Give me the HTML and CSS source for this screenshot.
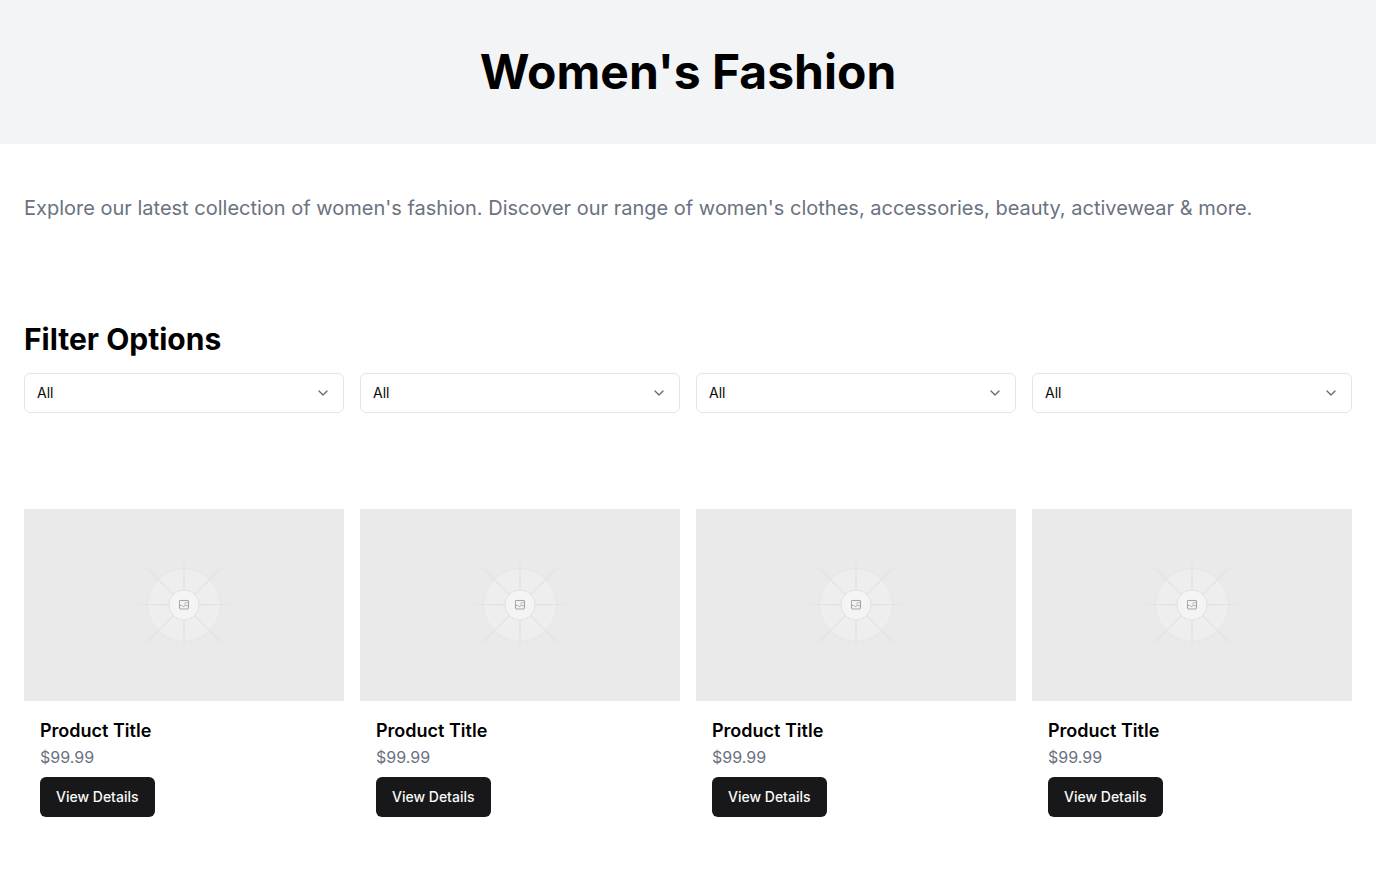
FILE: index.html
```html
<!DOCTYPE html>
<html lang="en">
<head>
<meta charset="utf-8">
<meta name="viewport" content="width=device-width, initial-scale=1">
<title>Women's Fashion</title>
<link rel="stylesheet" href="styles.css">
</head>
<body>
<svg class="defs" aria-hidden="true">
  <defs>
    <linearGradient id="fade" gradientUnits="userSpaceOnUse" x1="-47" y1="0" x2="47" y2="0">
      <stop offset="0" stop-color="#dfdfdf" stop-opacity="0.2"/>
      <stop offset="0.2" stop-color="#dfdfdf" stop-opacity="0.9"/>
      <stop offset="0.8" stop-color="#dfdfdf" stop-opacity="0.9"/>
      <stop offset="1" stop-color="#dfdfdf" stop-opacity="0.2"/>
    </linearGradient>
    <linearGradient id="fade-long" gradientUnits="userSpaceOnUse" x1="-62" y1="0" x2="62" y2="0">
      <stop offset="0" stop-color="#dfdfdf" stop-opacity="0.2"/>
      <stop offset="0.2" stop-color="#dfdfdf" stop-opacity="0.9"/>
      <stop offset="0.8" stop-color="#dfdfdf" stop-opacity="0.9"/>
      <stop offset="1" stop-color="#dfdfdf" stop-opacity="0.2"/>
    </linearGradient>
    <symbol id="placeholder" viewBox="-160 -96 320 192">
      <circle r="36.5" fill="#eeeeee" stroke="#e6e6e6"/>
      <g fill="url(#fade)">
        <rect x="-47" y="-1" width="94" height="1.2"/>
        <rect x="-47" y="-0.6" width="94" height="1.2" transform="rotate(90)"/>
      </g>
      <g fill="url(#fade-long)">
        <rect x="-60" y="-0.6" width="120" height="1.2" transform="rotate(45)"/>
        <rect x="-60" y="-0.6" width="120" height="1.2" transform="rotate(-45)"/>
      </g>
      <circle r="15" fill="#f4f4f4" stroke="#e2e2e2"/>
      <g fill="none" stroke="#a3a3a3">
        <rect x="-4.5" y="-4.5" width="9" height="8.5" rx="0.5"/>
        <path d="M-4.5 0.8L-2.5 0.3L-0.5 1.6L1.5 0.2L4.5 1.2M0.6 -0.6C0.6 -2.2 2.2 -2.4 2.6 -2.2C3 -3.2 4.4 -2.8 4.5 -1.8" stroke-width="0.9"/>
      </g>
    </symbol>
    <symbol id="chevron" viewBox="0 0 24 24">
      <path d="m6 9 6 6 6-6" fill="none" stroke="currentColor" stroke-width="2" stroke-linecap="round" stroke-linejoin="round"/>
    </symbol>
  </defs>
</svg>
<header class="hero"><h1 class="hero-title">Women's Fashion</h1></header>
<main>
  <section class="section">
    <p class="intro">Explore our latest collection of women's fashion. Discover our range of women's clothes, accessories, beauty, activewear &amp; more.</p>
  </section>
  <section class="section">
    <h2 class="filter-title">Filter Options</h2>
    <div class="grid">
      <div class="field"><select class="select" aria-label="Category"><option>All</option></select><svg class="chevron" aria-hidden="true"><use href="#chevron"/></svg></div>
      <div class="field"><select class="select" aria-label="Size"><option>All</option></select><svg class="chevron" aria-hidden="true"><use href="#chevron"/></svg></div>
      <div class="field"><select class="select" aria-label="Color"><option>All</option></select><svg class="chevron" aria-hidden="true"><use href="#chevron"/></svg></div>
      <div class="field"><select class="select" aria-label="Price"><option>All</option></select><svg class="chevron" aria-hidden="true"><use href="#chevron"/></svg></div>
    </div>
  </section>
  <section class="section">
    <div class="grid">
      <article class="card">
        <svg class="photo" role="img" aria-label="Product"><use href="#placeholder"/></svg>
        <div class="card-body"><h3 class="card-title">Product Title</h3><p class="price">$99.99</p><button class="button" type="button">View Details</button></div>
      </article>
      <article class="card">
        <svg class="photo" role="img" aria-label="Product"><use href="#placeholder"/></svg>
        <div class="card-body"><h3 class="card-title">Product Title</h3><p class="price">$99.99</p><button class="button" type="button">View Details</button></div>
      </article>
      <article class="card">
        <svg class="photo" role="img" aria-label="Product"><use href="#placeholder"/></svg>
        <div class="card-body"><h3 class="card-title">Product Title</h3><p class="price">$99.99</p><button class="button" type="button">View Details</button></div>
      </article>
      <article class="card">
        <svg class="photo" role="img" aria-label="Product"><use href="#placeholder"/></svg>
        <div class="card-body"><h3 class="card-title">Product Title</h3><p class="price">$99.99</p><button class="button" type="button">View Details</button></div>
      </article>
    </div>
  </section>
</main>
</body>
</html>
```
FILE: styles.css
```css
* { box-sizing: border-box; margin: 0; }
body { background: #fff; color: #000; font-family: Inter, sans-serif; font-size: 16px; line-height: 24px; }
.defs { position: absolute; width: 0; height: 0; }
.hero { padding: 48px 24px; background: #f3f4f6; text-align: center; }
.hero-title { font-size: 48px; line-height: 48px; font-weight: 700; }
.section { padding: 48px 24px; }
.intro { color: #6b7280; font-size: 20px; line-height: 33px; }
.filter-title { margin-bottom: 16px; font-size: 30px; line-height: 36px; font-weight: 700; }
.grid { display: grid; grid-template-columns: repeat(4, minmax(0, 1fr)); gap: 16px; }
.field { position: relative; }
.select { display: block; width: 100%; height: 40px; padding: 0 36px 0 12px; border: 1px solid #e4e4e7; border-radius: 6px; background: #fff; color: #09090b; font: 14px/20px Inter, sans-serif; appearance: none; }
.chevron { position: absolute; top: 12px; right: 13px; width: 16px; height: 16px; color: #09090b; opacity: 0.6; pointer-events: none; }
.photo { display: block; width: 100%; height: 192px; background: #eaeaea; }
.card-body { padding: 16px; }
.card-title { font-size: 18px; line-height: 28px; font-weight: 600; }
.price { color: #6b7280; }
.button { display: block; height: 40px; margin-top: 8px; padding: 0 16px; border: 0; border-radius: 6px; background: #18181b; color: #fafafa; font: 500 14px/20px Inter, sans-serif; }
@media (max-width: 900px) { .grid { grid-template-columns: repeat(2, minmax(0, 1fr)); } }
```
